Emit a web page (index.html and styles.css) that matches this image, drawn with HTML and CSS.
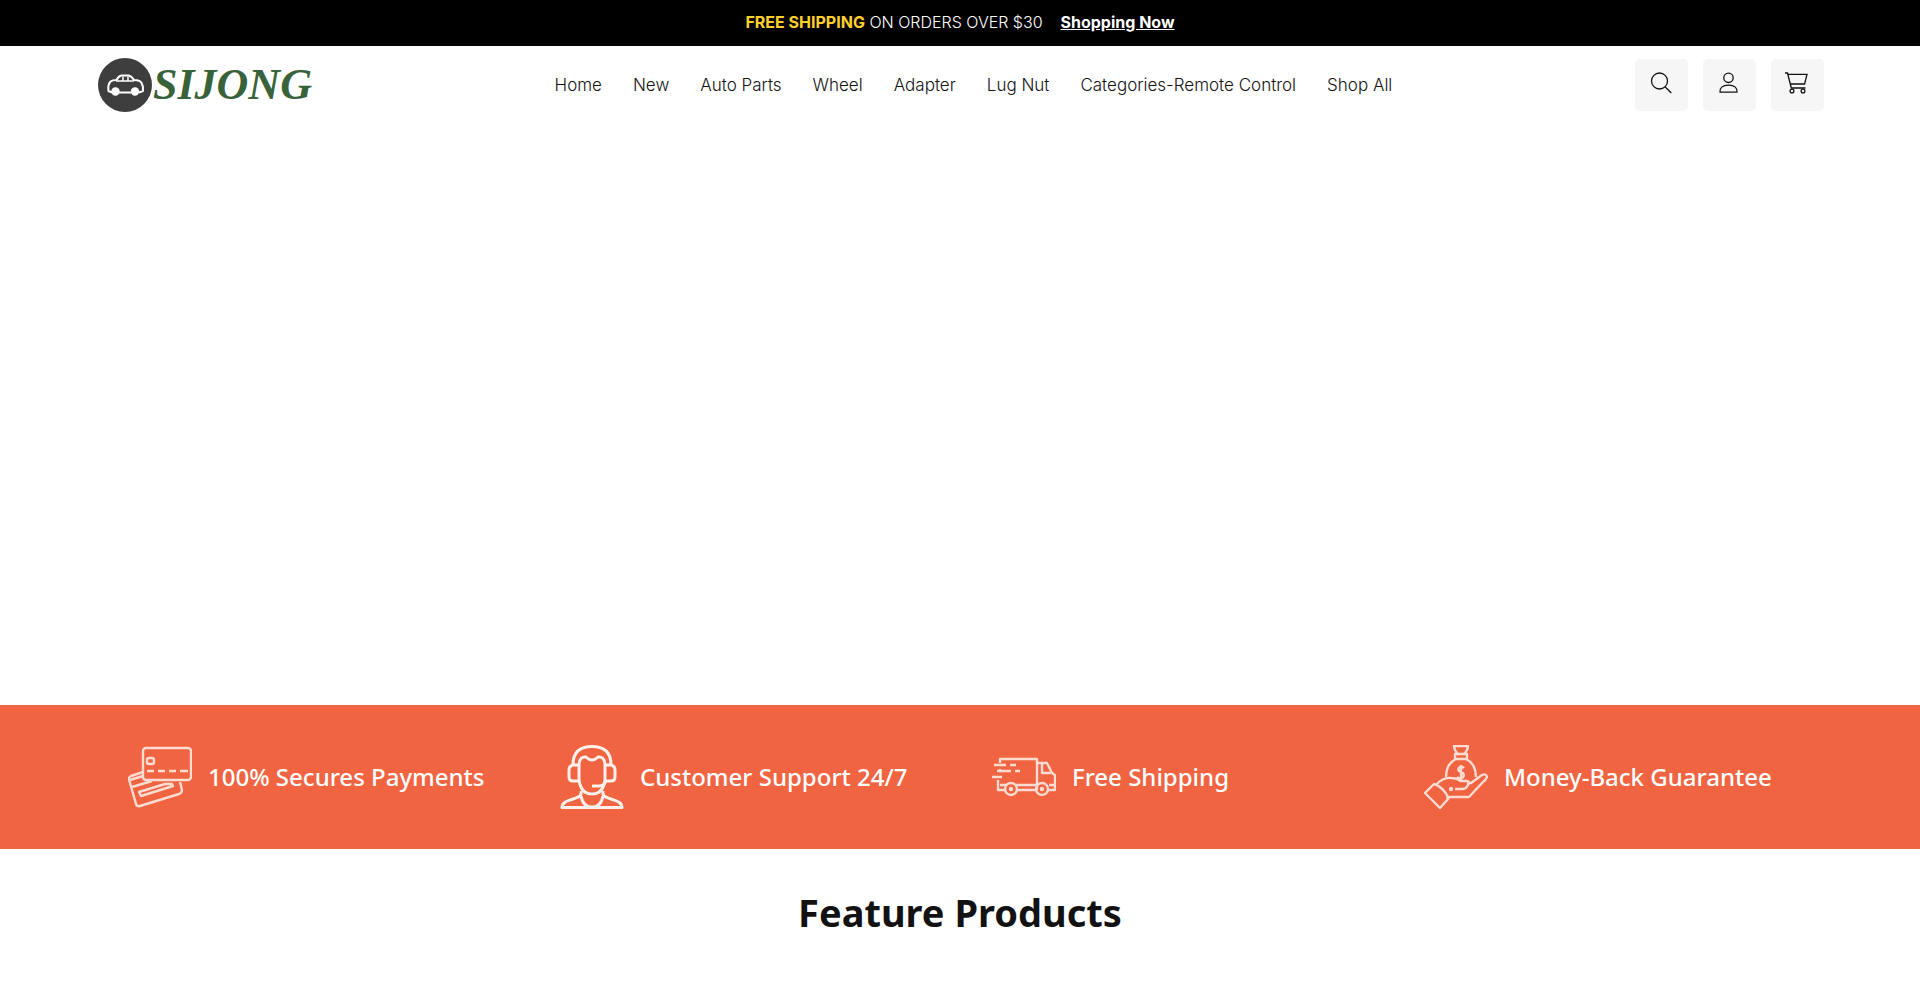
FILE: index.html
```html
<!DOCTYPE html>
<html lang="en">
<head>
    <meta charset="UTF-8" />
    <meta name="viewport" content="width=device-width, initial-scale=1" />
    <title>SIJONG</title>
    <link rel="stylesheet" href="styles.css">
</head>
<body>
<div class="announcement">
    <p><strong>FREE SHIPPING</strong> ON ORDERS OVER $30</p>
    <a href="#">Shopping Now</a>
</div>

<header class="header">
    <a class="logo" href="#">
        <svg class="logo-icon" viewBox="0 0 54 54" aria-hidden="true">
            <circle cx="27" cy="27" r="27" fill="#3e3e3e" />
            <g fill="none" stroke="#fff" stroke-width="2" stroke-linejoin="round">
                <path d="M14 34.500l-3.500-1.500q-1-6 2-9.500 2-1.500 6-1.500 2-4 5-4.500h7q3 .5 5.500 4.500 7 0 8 4 1.500 3 1 7l-4 1.500M21 34.500h13" />
                <path d="M18 23h18M25 18.500V23M30 18.500V23" stroke-width="1.500" />
            </g>
            <circle cx="17.500" cy="33.500" r="4.200" fill="#fff" />
            <circle cx="37" cy="33.500" r="4.200" fill="#fff" />
        </svg>
        <span class="logo-text">SIJONG</span>
    </a>

    <nav class="nav">
        <a href="#">Home</a>
        <a href="#">New</a>
        <a href="#">Auto Parts</a>
        <a href="#">Wheel</a>
        <a href="#">Adapter</a>
        <a href="#">Lug Nut</a>
        <a href="#">Categories-Remote Control</a>
        <a href="#">Shop All</a>
    </nav>

    <div class="header-actions">
        <button class="icon-btn" type="button" aria-label="Search">
            <svg viewBox="0 0 24 24">
                <circle cx="10.500" cy="10" r="8" />
                <path d="M16 15.700l6.300 6.300" />
            </svg>
        </button>
        <button class="icon-btn" type="button" aria-label="Account">
            <svg viewBox="0 0 24 24">
                <circle cx="11.500" cy="6.800" r="4.700" />
                <path d="M3 21.200c-.6-4.200 2.300-7 8.500-7s9.100 2.800 8.500 7z" />
            </svg>
        </button>
        <button class="icon-btn" type="button" aria-label="Cart">
            <svg viewBox="0 0 24 24">
                <path d="M0 2h2.500l3.800 15h14.200M3 3.300h19l-2.400 9.700H5.300" />
                <circle cx="7" cy="20" r="1.900" />
                <circle cx="18" cy="20" r="1.900" />
            </svg>
        </button>
    </div>
</header>

<main>
    <section class="hero"></section>

    <section class="features">
        <ul class="features-list">
            <li>
                <!-- cards -->
                <svg class="thin" viewBox="0 0 64 64">
                    <rect x="15" y="3" width="48" height="32" rx="3" />
                    <rect x="19" y="13" width="7" height="6" rx="2" />
                    <path d="M19 26h7M30 26h7M41 26h7M52 26h8" />
                    <path d="M15 27L3 31q-2.500 1-2 3.500L8 59q1 3 4 2l39-12q3-1 3-4l-2-8" />
                    <path d="M2 35l13-4M4 42l20-6M11 47l26-8h7l1 2-32 10z" />
                </svg>
                <span>100% Secures Payments</span>
            </li>
            <li>
                <!-- headset -->
                <svg viewBox="0 0 64 64">
                    <path d="M13 20C13 7 20 1.500 32 1.500s19 5.500 19 18.500" />
                    <path d="M18 20h-5q-4 1-4 5v7q0 4 4 4h6M46 20h5q4 1 4 5v7q0 4-4 4h-6" />
                    <path d="M19 35V19q1-8 7-7 3 3 6 3t6-3q6-1 7 7v16q-2 14-13 14T19 35z" />
                    <path d="M32 41h7q6 0 7-6M21 46c1 6-3 6-8 8S2 57 2 62.500h60c0-5.500-6-6.500-11-8.500s-9-2-8-8" />
                    <path d="M21 51q2 11 11 11t11-11" />
                </svg>
                <span>Customer Support 24/7</span>
            </li>
            <li>
                <!-- truck -->
                <svg class="thin" viewBox="0 0 64 64">
                    <path d="M8 18v-4h37v31M6 35v10h7M8 24v3M25 45h20M8 40h7M23 40h22" />
                    <path d="M2 20h12M18 20h6M5 26h14M23 26h5M0 32h10" />
                    <path d="M45 18h10l5 10 3 2v15h-6M50 19v9h9M57 40h6" />
                    <circle cx="19" cy="44" r="6" />
                    <circle cx="50" cy="44" r="6" />
                    <circle cx="19" cy="44" r="1" />
                    <circle cx="50" cy="44" r="1" />
                </svg>
                <span>Free Shipping</span>
            </li>
            <li>
                <!-- hand with money bag -->
                <svg class="thin" viewBox="0 0 64 64">
                    <path d="M30 1h14q0 4-4 8h-6q-4-4-4-8zM31 9h12v5H31zM32 14q-10 5-10 18M42 14q10 5 10 18" />
                    <path d="M12 40q7-8 15-7 6 0 9 3h7q4 1 1 4-2 4-5 4h-8M43 38h4l11-8q4-2 5 2-1 3-4 5L45 52H26l-3 2" />
                    <path d="M1 48l9-9q6 2 10 7 4 4 4 8l-8 9z" />
                    <path d="M40 23q-2-2-4-1c-3 2-2 4 1 5s4 4 1 6q-3 1-5-1M37 20v15" />
                    <circle cx="27" cy="44" r="1" />
                </svg>
                <span>Money-Back Guarantee</span>
            </li>
        </ul>
    </section>

    <section class="products">
        <h2>Feature Products</h2>
    </section>
</main>
</body>
</html>
```
FILE: styles.css
```css
:root {
    --color-text: #121212;
    --color-accent: #f06442;
    --color-yellow: #ffd02c;
    --color-logo: #38623a;
    --color-button: #f6f6f6;
}

* {
    box-sizing: border-box;
}

body {
    margin: 0;
    font-family: Inter, sans-serif;
    font-size: 16px;
    font-weight: 300;
    color: var(--color-text);
    background: #fff;
}

a {
    color: inherit;
    text-decoration: none;
}

.announcement {
    display: flex;
    justify-content: center;
    gap: 18px;
    padding: 10px 20px 12px;
    line-height: 24px;
    color: #fff;
    background: #000;
}

.announcement p {
    margin: 0;
}

.announcement strong {
    font-weight: 700;
    color: var(--color-yellow);
}

.announcement a {
    font-weight: 700;
    text-decoration: underline;
}

.header {
    display: flex;
    align-items: center;
    justify-content: space-between;
    padding: 12px 5% 14px;
}

.logo {
    display: flex;
    align-items: center;
    gap: 1px;
    padding-left: 2px;
}

.logo-icon {
    width: 54px;
    height: 54px;
}

.logo-text {
    font-family: "Liberation Serif", serif;
    font-size: 44px;
    font-style: italic;
    font-weight: 700;
    line-height: 52px;
    color: var(--color-logo);
}

.nav {
    display: flex;
    flex-wrap: wrap;
    gap: 8px 31px;
    font-size: 17px;
    line-height: 24px;
}

.nav a:hover {
    text-decoration: underline;
}

.header-actions {
    display: flex;
    gap: 15px;
}

.icon-btn {
    display: flex;
    justify-content: center;
    width: 53px;
    height: 52px;
    padding: 12px 0;
    border: none;
    border-radius: 5px;
    background: var(--color-button);
    cursor: pointer;
}

.icon-btn svg {
    width: 24px;
    height: 24px;
    fill: none;
    stroke: var(--color-text);
    stroke-width: 1.3;
}

.hero {
    min-height: 579px;
}

.features {
    padding: 40px 5%;
    color: #fff;
    background: var(--color-accent);
}

.features-list {
    display: grid;
    grid-template-columns: repeat(4, 1fr);
    margin: 0;
    padding: 0;
    list-style: none;
}

.features-list li {
    display: flex;
    align-items: center;
    gap: 16px;
    padding-left: 32px;
    font-family: "Noto Sans", sans-serif;
    font-size: 24px;
    font-weight: 500;
    line-height: 32px;
}

.features-list svg {
    flex-shrink: 0;
    width: 64px;
    height: 64px;
    fill: none;
    stroke: #fff0eb;
    stroke-width: 3;
    stroke-linejoin: round;
}

.features-list .thin {
    stroke: #ffdcd2;
    stroke-width: 2.4;
}

.products {
    padding: 35px 5%;
}

.products h2 {
    margin: 0;
    font-family: "Noto Sans", sans-serif;
    font-size: 38px;
    font-weight: 700;
    line-height: 56px;
    text-align: center;
}

@media (max-width: 1200px) {
    .features-list {
        grid-template-columns: repeat(2, 1fr);
        gap: 24px 0;
    }
}
```
